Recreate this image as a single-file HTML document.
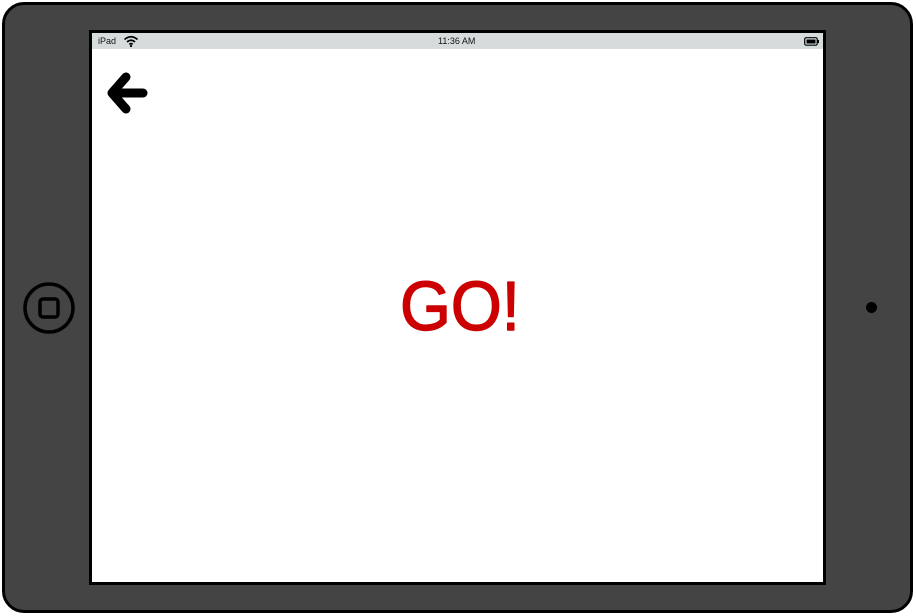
<!DOCTYPE html>
<html><head><meta charset="utf-8"><style>
html,body{margin:0;padding:0;background:#fff;width:916px;height:616px;overflow:hidden}
.dev{position:absolute;left:2px;top:2px;width:905px;height:605px;background:#444;border:3px solid #000;border-radius:22px}
.scr{position:absolute;left:89px;top:30px;width:731px;height:549px;background:#fff;border:3px solid #000}
.sb{position:absolute;left:0;top:0;width:731px;height:16px;background:#d6dcdc;font-family:"Liberation Sans",sans-serif;font-size:9px;color:#111}
</style></head><body>
<div class="dev"></div>
<svg style="position:absolute;left:22px;top:282px" width="54" height="54"><circle cx="27" cy="26" r="24" fill="none" stroke="#000" stroke-width="3.5"/><rect x="18" y="17" width="18" height="18" rx="3" fill="none" stroke="#000" stroke-width="3.5"/></svg>
<div style="position:absolute;left:866px;top:302px;width:11px;height:11px;border-radius:50%;background:#000"></div>
<div class="scr">
<div class="sb"><span style="position:absolute;left:6px;top:3px">iPad</span>
<svg style="position:absolute;left:31px;top:2px" width="16" height="12"><path d="M1.5 4.5 Q8 -1 14.5 4.5 M4 7 Q8 3.5 12 7 M6.3 9.3 Q8 8 9.7 9.3" fill="none" stroke="#000" stroke-width="1.7"/><circle cx="8" cy="11" r="1.1"/></svg>
<span style="position:absolute;left:346px;top:3px">11:36 AM</span>
<svg style="position:absolute;left:712px;top:4px" width="16" height="9"><rect x="0.7" y="0.7" width="12.5" height="7.5" rx="1.5" fill="none" stroke="#000" stroke-width="1.2"/><rect x="2.5" y="2.5" width="9" height="4" fill="#000"/><rect x="13.5" y="3" width="1.5" height="3" fill="#000"/></svg>
</div>
<svg style="position:absolute;left:14px;top:38px" width="44" height="46"><path d="M20 6 L6 22 L20 38" fill="none" stroke="#000" stroke-width="9" stroke-linecap="round" stroke-linejoin="round"/><path d="M10 22 L37 22" stroke="#000" stroke-width="9" stroke-linecap="round"/></svg>
<svg style="position:absolute;left:0;top:0" width="731" height="549"><text x="308" y="297" font-family="Liberation Sans, sans-serif" font-size="70" fill="#cc0000" stroke="#cc0000" stroke-width="1.4" stroke-linejoin="round" textLength="120" lengthAdjust="spacingAndGlyphs">GO!</text></svg>
</div>
</body></html>
